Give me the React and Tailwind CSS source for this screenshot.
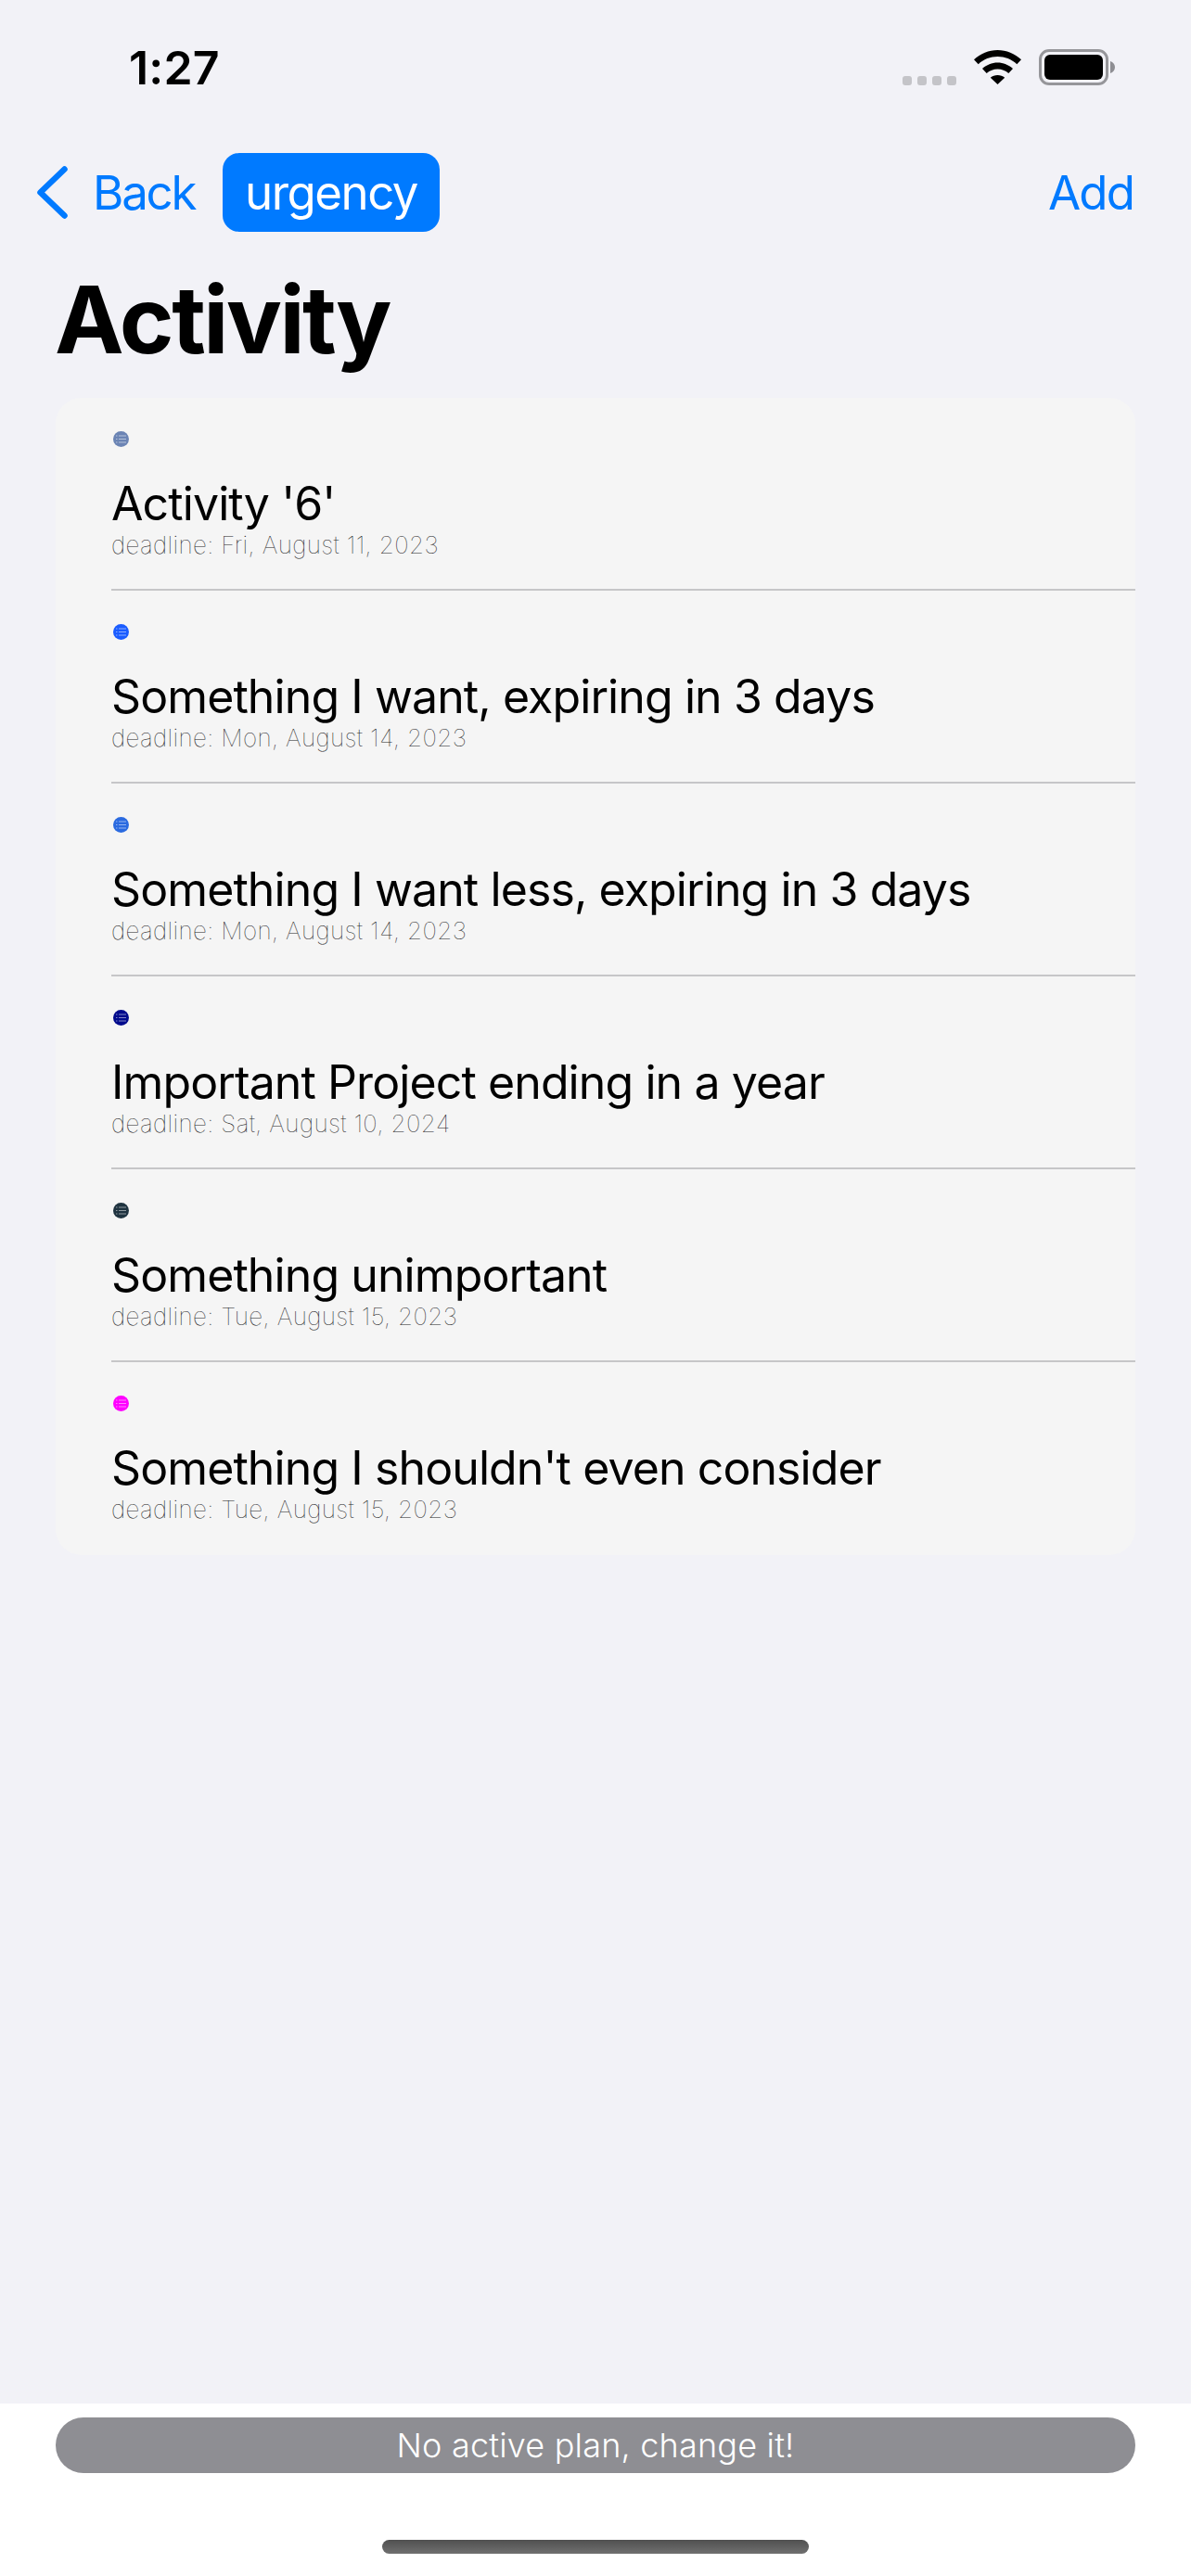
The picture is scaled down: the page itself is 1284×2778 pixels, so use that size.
const font = { fontFamily: 'Inter, "Liberation Sans", sans-serif' };

const rows = [
  { title: "Activity '6'", deadline: 'deadline: Fri, August 11, 2023', color: 'bg-[#6b84b4]' },
  { title: 'Something I want, expiring in 3 days', deadline: 'deadline: Mon, August 14, 2023', color: 'bg-[#1a5cff]' },
  { title: 'Something I want less, expiring in 3 days', deadline: 'deadline: Mon, August 14, 2023', color: 'bg-[#2a6ae0]' },
  { title: 'Important Project ending in a year', deadline: 'deadline: Sat, August 10, 2024', color: 'bg-[#000a8c]' },
  { title: 'Something unimportant', deadline: 'deadline: Tue, August 15, 2023', color: 'bg-[#1f3340]' },
  { title: "Something I shouldn't even consider", deadline: 'deadline: Tue, August 15, 2023', color: 'bg-[#ff00ff]' },
];

function StatusBar() {
  return (
    <div className="flex h-[100px] items-start justify-between pt-[53px] pl-[139px] pr-[82px]">
      <span className="text-[50px] leading-[40px] font-semibold tracking-[0.2px] text-black">1:27</span>
      <div className="flex items-center">
        <div className="mt-[28px] mr-[19px] flex gap-[6px]">
          <span className="h-[10px] w-[10px] rounded-[3px] bg-[#c4c4c8]" />
          <span className="h-[10px] w-[10px] rounded-[3px] bg-[#c4c4c8]" />
          <span className="h-[10px] w-[10px] rounded-[3px] bg-[#c4c4c8]" />
          <span className="h-[10px] w-[10px] rounded-[3px] bg-[#c4c4c8]" />
        </div>
        <svg width="51" height="37" viewBox="0 0 51 37" className="mr-[19px]">
          <path fill="#000" d="M25.5 0C35 0 44 3.8 51 10.3L46.3 15.2C40.6 9.9 33.3 7 25.5 7S10.4 9.9 4.7 15.2L0 10.3C7 3.8 16 0 25.5 0Z" />
          <path fill="#000" d="M25.5 13.5C31.6 13.5 37.4 15.9 42 20L37.3 24.9C34 22 29.9 20.4 25.5 20.4S17 22 13.7 24.9L9 20C13.6 15.9 19.4 13.5 25.5 13.5Z" />
          <path fill="#000" d="M25.5 27C28.4 27 31 28 33.2 29.8L25.5 37L17.8 29.8C20 28 22.6 27 25.5 27Z" />
        </svg>
        <div className="flex items-center">
          <div className="flex h-[39px] w-[75px] items-center justify-center rounded-[11px] border-[3px] border-[#96969a]">
            <div className="h-[27px] w-[63px] rounded-[6px] bg-black" />
          </div>
          <svg width="5" height="13" viewBox="0 0 5 13" className="ml-[2px]">
            <path fill="#8e8e93" d="M0 0C3 1 5 3.500 5 6.500S3 12 0 13Z" />
          </svg>
        </div>
      </div>
    </div>
  );
}

function NavBar() {
  return (
    <div className="mt-[65px] flex h-[85px] items-center justify-between pl-[40px] pr-[62px]">
      <div className="flex items-center">
        <svg width="33" height="57" viewBox="0 0 33 57" fill="none" className="mr-[27px]">
          <path d="M29.500 3.500L3.500 28.500L29.500 53.500" stroke="#007aff" strokeWidth="6.500" strokeLinecap="round" strokeLinejoin="round" />
        </svg>
        <span className="w-[112px] text-[51px] leading-[60px] font-normal tracking-[-2.2px] text-[#007aff]">Back</span>
        <span className="ml-[28px] flex h-[85px] w-[234px] items-center justify-center rounded-[18px] bg-[#007aff] text-[51px] leading-[60px] font-normal tracking-[-1.5px] text-white">urgency</span>
      </div>
      <span className="text-[51px] leading-[60px] font-normal tracking-[-1.9px] text-[#007aff]">Add</span>
    </div>
  );
}

function ListDot({ color }) {
  return (
    <span className={'ml-[2px] flex h-[17px] w-[17px] items-center justify-center rounded-full ' + color}>
      <svg width="11" height="9" viewBox="0 0 11 9" fill="none" stroke="#ffffff" strokeOpacity="0.5" strokeWidth="1">
        <path d="M0 1H1.500M3 1H11M0 4.500H1.500M3 4.500H11M0 8H1.500M3 8H11" />
      </svg>
    </span>
  );
}

function Row({ row, last }) {
  return (
    <div className={'ml-[60px] h-[208px] pt-[36px] ' + (last ? '' : 'border-b-[2px] border-[#c6c6c8]')}>
      <ListDot color={row.color} />
      <div className="mt-[32px] text-[50px] leading-[58px] font-normal tracking-[-0.9px] text-black">{row.title}</div>
      <div className="text-[26px] leading-[32px] font-thin tracking-[0.37px] text-[#1c1c1e]">{row.deadline}</div>
    </div>
  );
}

export default function App() {
  return (
    <div className="flex h-[2778px] w-[1284px] flex-col overflow-hidden bg-[#f2f2f7]" style={font}>
      <StatusBar />
      <NavBar />
      <h1 className="mt-[40px] ml-[59px] text-[100px] leading-[110px] font-bold tracking-[-2.500px] text-black">Activity</h1>
      <div className="mx-[60px] mt-[29px] rounded-[28px] bg-[#f5f5f5]">
        {rows.map((r, i) => (
          <Row key={i} row={r} last={i === rows.length - 1} />
        ))}
      </div>
      <div className="mt-auto flex h-[186px] flex-col items-center bg-white pt-[15px]">
        <div className="flex h-[60px] w-[1164px] items-center justify-center rounded-full bg-[#8e8e93] text-[36px] font-light tracking-[0.2px] text-white">No active plan, change it!</div>
        <div className="mt-[72px] h-[15px] w-[460px] rounded-full bg-gradient-to-b from-[#505050] to-[#707070]" />
      </div>
    </div>
  );
}
